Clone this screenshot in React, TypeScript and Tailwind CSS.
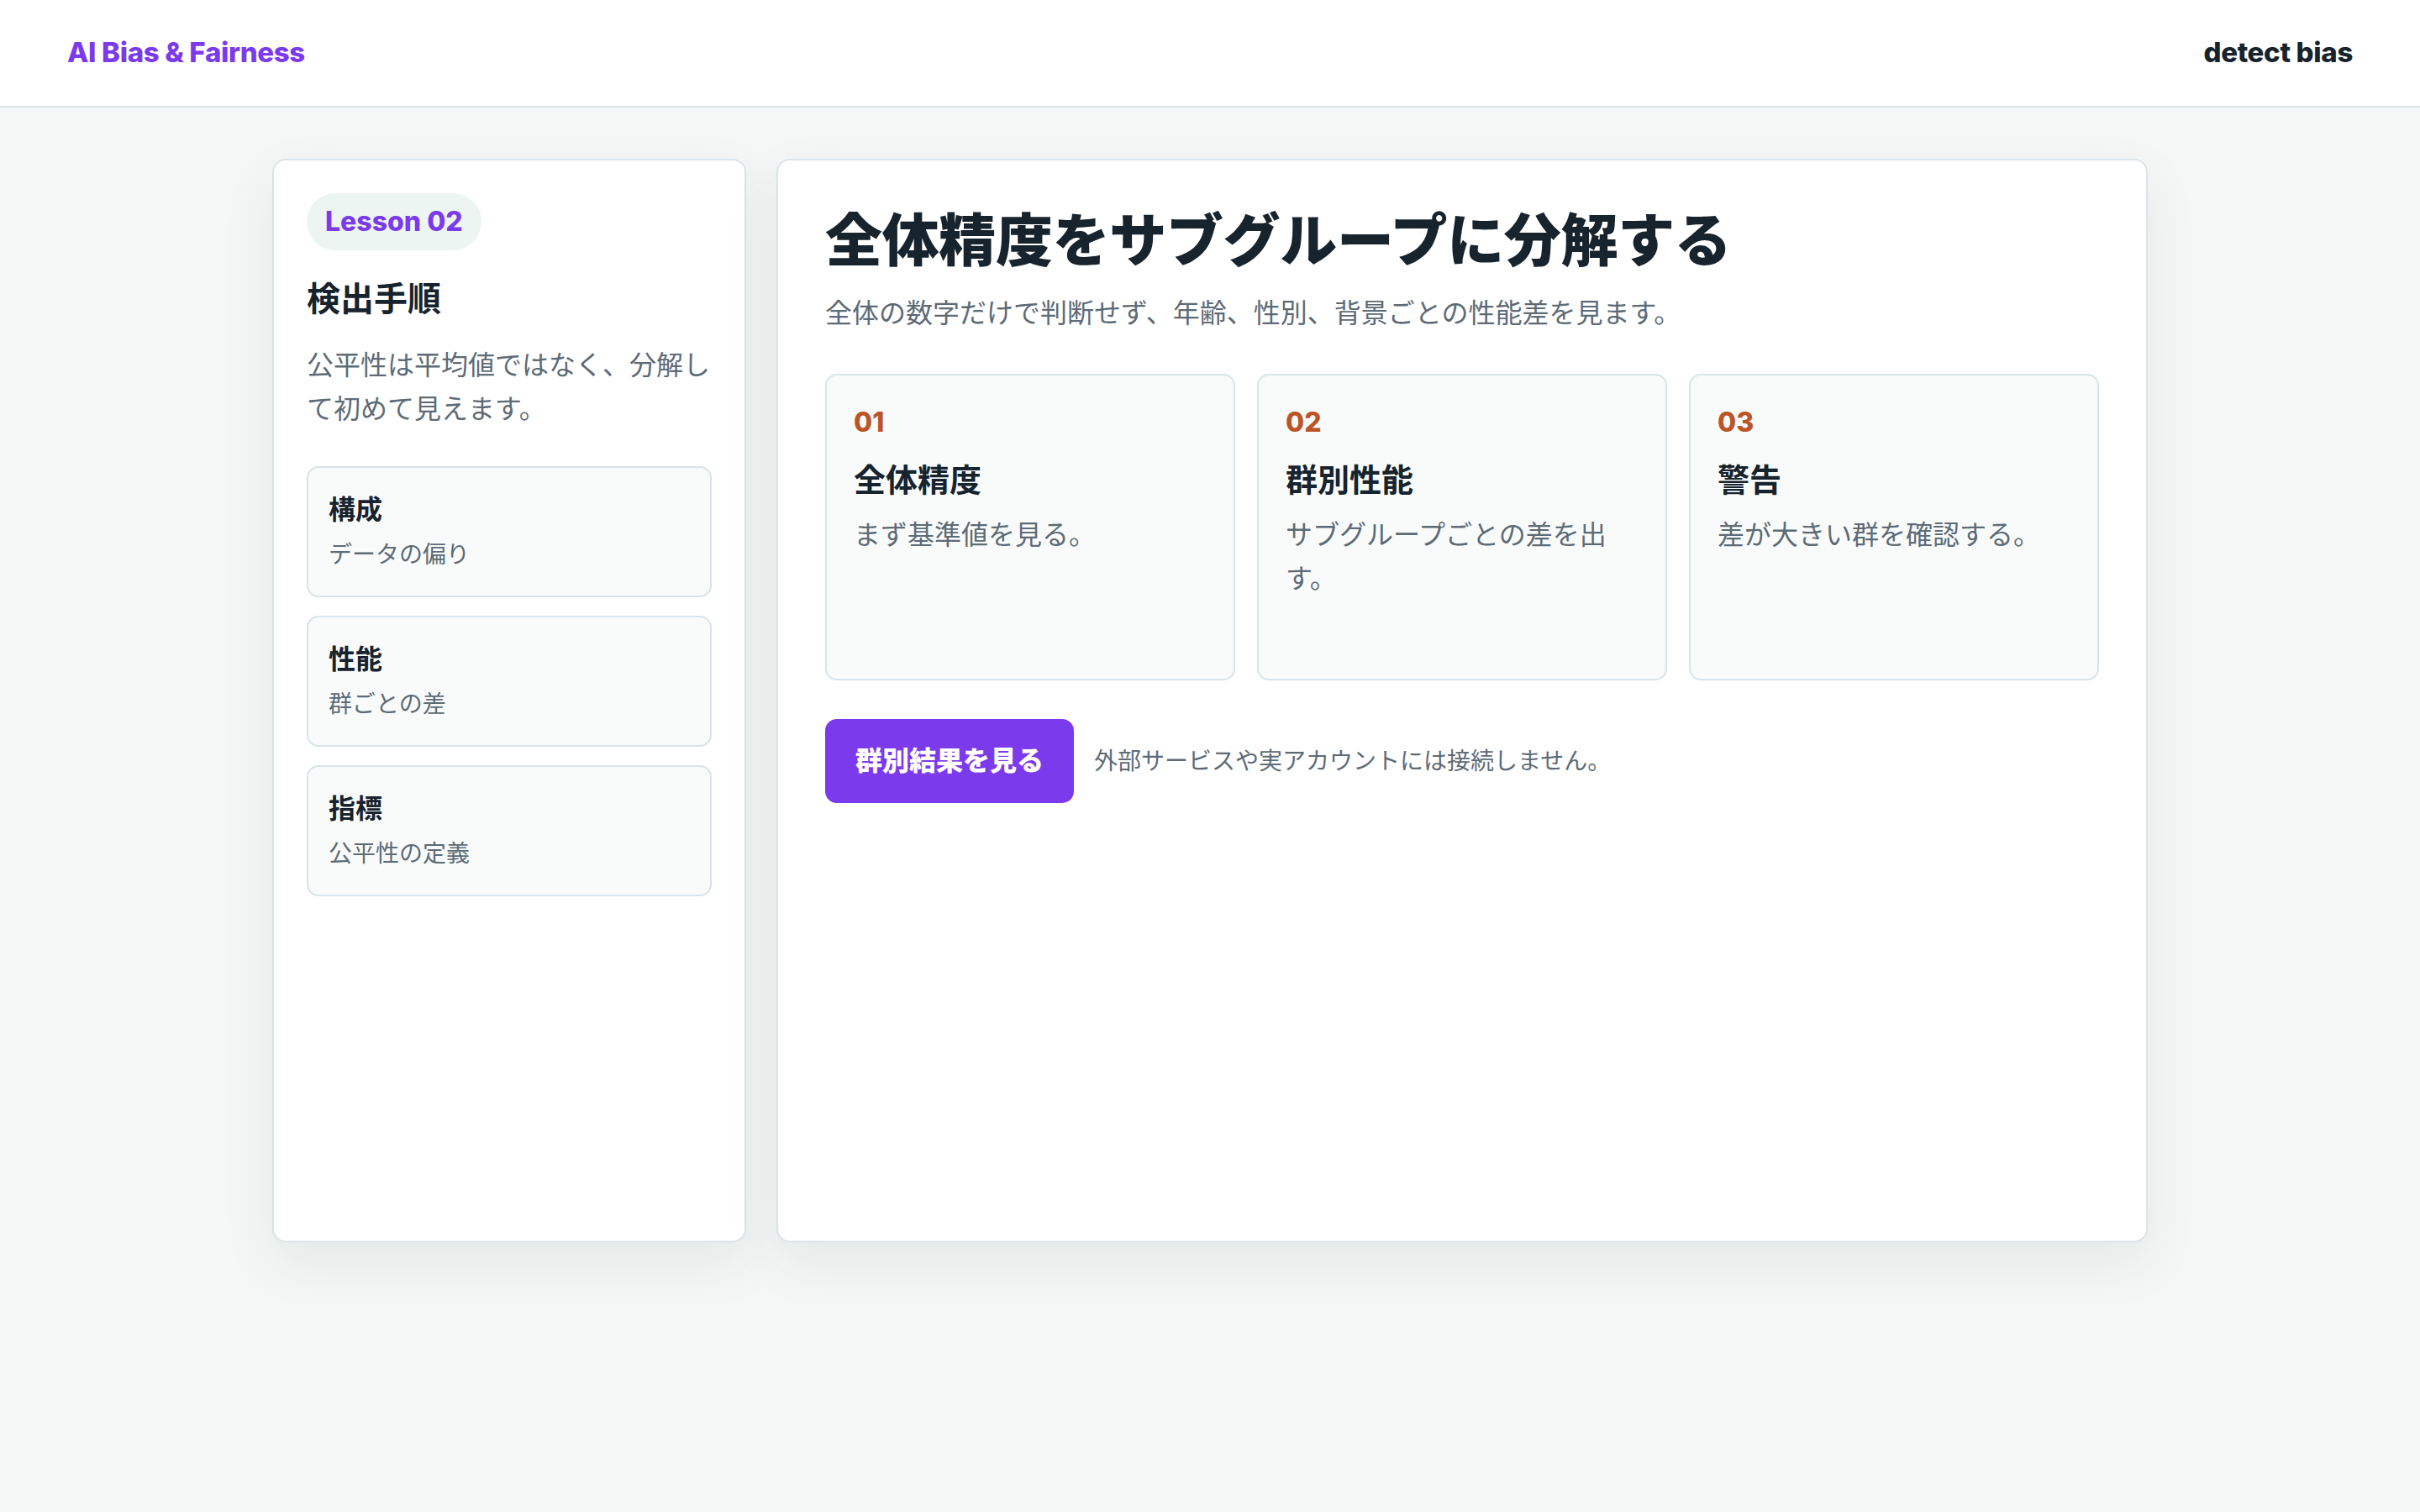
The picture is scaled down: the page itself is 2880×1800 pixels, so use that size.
const steps = [
  { no: "01", title: "全体精度", text: "まず基準値を見る。" },
  { no: "02", title: "群別性能", text: "サブグループごとの差を出す。" },
  { no: "03", title: "警告", text: "差が大きい群を確認する。" },
];

const sideItems = [
  { title: "構成", text: "データの偏り" },
  { title: "性能", text: "群ごとの差" },
  { title: "指標", text: "公平性の定義" },
];

export default function App() {
  return (
    <div
      className="min-h-screen bg-[#f4f7f6] text-[#17232d]"
      style={{ fontFamily: 'Inter, "Noto Sans CJK JP", sans-serif' }}
    >
      <header className="h-[128px] bg-white border-b-2 border-[#d9e2e4] px-[80px] flex items-center justify-between">
        <span className="text-[33px] font-extrabold text-[#7c3aed] tracking-[-0.01em]">AI Bias &amp; Fairness</span>
        <span className="text-[33px] font-extrabold text-[#17232d] tracking-[-0.01em]">detect bias</span>
      </header>

      <main className="pt-[61px] pb-[64px]">
        <div className="w-[2232px] mx-auto grid grid-cols-[564px_1fr] gap-[36px]">
          {/* sidebar */}
          <aside className="min-h-[1290px] bg-white border-2 border-[#dbe4e8] rounded-[16px] p-[39px] shadow-[0_24px_64px_rgba(20,45,55,0.08)]">
            <div className="inline-flex h-[68px] items-center px-[22px] rounded-full bg-[#edf5f2] text-[32px] font-extrabold text-[#7c3aed]">
              Lesson 02
            </div>
            <h2 className="mt-[32px] text-[40px] leading-[52px] font-bold">検出手順</h2>
            <p className="mt-[27px] text-[32px] leading-[52px] text-[#5d6b76]">
              公平性は平均値ではなく、分解して初めて見えます。
            </p>
            <div className="mt-[42px] flex flex-col gap-[22px]">
              {sideItems.map((item) => (
                <div
                  key={item.title}
                  className="h-[156px] rounded-[14px] border-2 border-[#dae3e7] bg-[#f9fbfb] px-[24px] pt-[26px]"
                >
                  <div className="text-[32px] leading-[48px] font-bold">{item.title}</div>
                  <div className="mt-[6px] text-[28px] leading-[46px] text-[#5d6b76]">{item.text}</div>
                </div>
              ))}
            </div>
          </aside>

          {/* main panel */}
          <section className="min-h-[1290px] bg-white border-2 border-[#dbe4e8] rounded-[16px] p-[56px] shadow-[0_24px_64px_rgba(20,45,55,0.08)]">
            <h1 className="text-[68px] leading-[78px] font-black tracking-[-0.005em]">全体精度をサブグループに分解する</h1>
            <p className="mt-[23px] text-[32px] leading-[50px] text-[#5d6b76]">
              全体の数字だけで判断せず、年齢、性別、背景ごとの性能差を見ます。
            </p>

            <div className="mt-[47px] grid grid-cols-3 gap-[26px]">
              {steps.map((s) => (
                <div
                  key={s.no}
                  className="min-h-[365px] rounded-[14px] border-2 border-[#dae3e7] bg-[#f9fbfb] p-[32px]"
                >
                  <div className="text-[32px] leading-[48px] font-extrabold text-[#bb5528]">{s.no}</div>
                  <div className="mt-[18px] text-[38px] leading-[52px] font-bold">{s.title}</div>
                  <div className="mt-[14px] text-[32px] leading-[52px] text-[#5d6b76]">{s.text}</div>
                </div>
              ))}
            </div>

            <div className="mt-[46px] flex items-center gap-[24px]">
              <button className="h-[100px] px-[36px] rounded-[14px] bg-[#7c3aed] text-white text-[32px] font-black">
                群別結果を見る
              </button>
              <span className="text-[28px] text-[#5d6b76]">外部サービスや実アカウントには接続しません。</span>
            </div>
          </section>
        </div>
      </main>
    </div>
  );
}
